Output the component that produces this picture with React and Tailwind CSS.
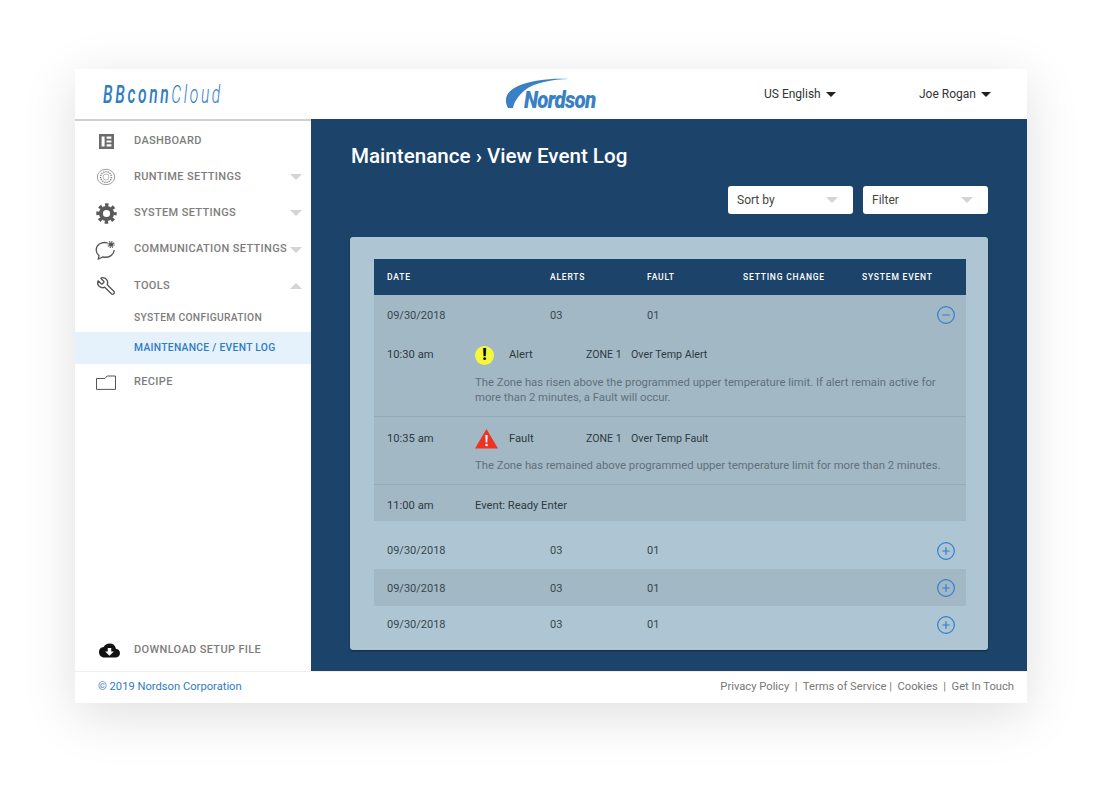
import { CirclePlus, CircleMinus, Wrench } from 'lucide-react'
import { MdCloudDownload } from 'react-icons/md'

const Caret = ({ up, className = 'border-[#d4d4d4]' }) => (
  <span className={`w-0 h-0 border-x-[6px] border-x-transparent ${up ? 'border-b-[6px]' : 'border-t-[6px]'} ${className}`} />
)
const DarkCaret = () => (
  <span className="w-0 h-0 border-x-[5px] border-x-transparent border-t-[5px] border-[#222]" />
)

const DashIcon = () => (
  <svg width="15" height="15" viewBox="0 0 15 15"><path fill="#6b6b6b" fillRule="evenodd" d="M0 0h15v15H0zM2.6 2.6v9.8h3V2.6zM7.6 2.6v2.2h4.8V2.6zM7.6 6.4v2.2h4.8V6.4zM7.6 10.2v2.2h4.8v-2.2z" /></svg>
)
const RuntimeIcon = () => (
  <svg width="20" height="18" viewBox="0 0 20 18" fill="none" stroke="#777">
    <ellipse cx="10" cy="9" rx="8.7" ry="7.7" strokeWidth=".7" />
    <circle cx="10" cy="9" r="5.4" strokeWidth="1.4" strokeDasharray="1.2 1" />
    <circle cx="10" cy="9" r="3" strokeWidth=".5" />
  </svg>
)
const GearIcon = () => (
  <svg width="21" height="21" viewBox="0 0 21 21" fill="none" stroke="#5a5a5a">
    <circle cx="10.5" cy="10.5" r="5.6" strokeWidth="4" />
    <circle cx="10.5" cy="10.5" r="8.5" strokeWidth="3.4" strokeDasharray="3.4 3.28" strokeDashoffset="1.7" />
  </svg>
)
const ChatIcon = () => (
  <svg width="22" height="20" viewBox="0 0 22 20" fill="none" stroke="#555" strokeWidth="1.3">
    <path d="M12.5 2.8C6 1.5 1.2 5 1.2 10c0 2.6 1.2 4.4 2.8 5.6L3.4 19l4.4-2c6 1.2 11.2-2 11.4-7" />
    <circle cx="16" cy="4.5" r="2.2" fill="#555" stroke="none" />
    <circle cx="16" cy="4.5" r="3" strokeWidth="1.2" strokeDasharray="1.2 1.15" />
  </svg>
)
const FolderIcon = () => (
  <svg width="20" height="15" viewBox="0 0 20 15" fill="none" stroke="#555" strokeWidth="1"><path d="M.5 3.5h8.4L11.2 1h8.3v13.4H.5z" /></svg>
)

const NavItem = ({ icon, label, caret, active, sub, h = 'h-[36px]' }) => (
  <div className={`flex items-center pl-[59px] relative font-medium ${sub ? 'text-[10.3px] tracking-[0.3px]' : 'text-[11px] tracking-[0.35px]'} ${active ? 'text-[#2f7cc4] bg-[#e5f2fb]' : 'text-[#7d7d7d]'} ${h}`}>
    {icon && <span className="absolute left-[19px] w-[24px] flex justify-center">{icon}</span>}
    <span>{label}</span>
    {caret && <span className="absolute right-[9px] flex"><Caret up={caret === 'up'} /></span>}
  </div>
)

const Select = ({ label }) => (
  <div className="w-[125px] h-[28px] bg-white rounded-[3px] flex items-center justify-between pl-[9px] pr-[15px] text-[12px] text-[#444]">
    {label}<Caret />
  </div>
)

const cols = 'grid grid-cols-[163px_97px_96px_119px_1fr] items-center pl-[13px]'

const DayRow = ({ striped, open, h = 'h-[37px]' }) => (
  <div className={`relative ${h} ${striped ? 'bg-[#a3b8c5]' : ''}`}>
    <div className={`${cols} h-full ${striped ? 'pt-[3px]' : 'pt-[2px]'} text-[11px] text-[#36474f]`}>
      <span>09/30/2018</span><span>03</span><span>01</span>
    </div>
    <span className="absolute right-[10px] inset-y-0 flex items-center text-[#2f7fd0]">
      {open ? <CircleMinus size={20} strokeWidth={1.4} /> : <CirclePlus size={20} strokeWidth={1.4} />}
    </span>
  </div>
)

const AlertIcon = () => (
  <span className="w-[19px] h-[19px] rounded-full bg-[#f4f73c] flex items-center justify-center font-black text-[16px] leading-none text-black">!</span>
)
const FaultIcon = () => (
  <svg width="23" height="20" viewBox="0 0 23 20"><path fill="#ef3323" d="M11.5 0 23 19.5H0z" /><path fill="#fff" d="M10.4 6h2.2l-.3 7.5h-1.6z" /><circle cx="11.5" cy="16" r="1.3" fill="#fff" /></svg>
)

const EventRow = ({ time, icon, type, text, title, gap }) => (
  <div className="pl-[13px] pr-[24px] border-b border-[#93aab9]">
    <div className="flex items-center h-[22px] text-[#2d3a42] text-[11.2px]">
      <span className="w-[88px]">{time}</span>
      <span className="w-[34px] flex">{icon}</span>
      <span className="w-[77px]">{type}</span>
      <span className="w-[45px] text-[10.6px]">ZONE 1</span>
      <span className="text-[10.7px]">{title}</span>
    </div>
    <p className={`ml-[88px] text-[11.3px] leading-[15px] text-[#5f707c] ${gap}`}>{text}</p>
  </div>
)

export default function App() {
  return (
    <div className="min-h-[785px] bg-white pt-[69px] pl-[75px] font-['Roboto',sans-serif]">
      <div className="w-[952px] h-[634px] bg-white flex flex-col shadow-[0_12px_50px_rgba(0,0,0,0.13)]">
        <header className="h-[50px] flex items-center relative shrink-0">
          <div className="w-[236px] pl-[28px] text-[#2f7cc4] text-[26px] italic tracking-[4.4px] leading-none whitespace-nowrap">
            <span className="inline-block origin-left scale-x-[0.6]"><span className="font-medium">BBconn</span><span className="font-light">Cloud</span></span>
          </div>
          <div className="absolute left-[429px] top-[8px] w-[92px] h-[34px]">
            <svg width="92" height="34" viewBox="0 0 92 34" className="absolute inset-0"><path fill="#3a80c4" d="M4 31C-1 22 3 14 14 9 28 3 48 1 65 2 48 2 30 6 21 13 14 19 10 25 9 31z" /></svg>
            <span className="absolute left-[20px] top-[11px] text-[#3a80c4] text-[24px] font-black italic tracking-[-0.8px] leading-[24px] origin-left scale-x-[0.855] inline-block">Nordson</span>
          </div>
          <div className="absolute left-[689px] flex items-center gap-[5px] text-[12px] text-[#333]">US English <DarkCaret /></div>
          <div className="absolute left-[844px] flex items-center gap-[5px] text-[12px] text-[#333]">Joe Rogan <DarkCaret /></div>
        </header>
        <div className="flex flex-1 min-h-0">
          <aside className="w-[236px] shrink-0 flex flex-col border-t-2 border-[#d0d0d0] pt-[3px]">
            <NavItem icon={<DashIcon />} label="DASHBOARD" h="h-[35px]" />
            <NavItem icon={<RuntimeIcon />} label="RUNTIME SETTINGS" caret="down" />
            <NavItem icon={<GearIcon />} label="SYSTEM SETTINGS" caret="down" />
            <NavItem icon={<ChatIcon />} label="COMMUNICATION SETTINGS" caret="down" h="h-[37px]" />
            <NavItem icon={<Wrench size={20} color="#555" strokeWidth={1.6} className="-scale-x-100" />} label="TOOLS" caret="up" />
            <NavItem label="SYSTEM CONFIGURATION" sub h="h-[28px]" />
            <NavItem label="MAINTENANCE / EVENT LOG" sub active h="h-[32px]" />
            <NavItem icon={<FolderIcon />} label="RECIPE" />
            <div className="mt-auto mb-[3px]">
              <NavItem icon={<span className="ml-[6px] flex"><MdCloudDownload size={21} color="#111" /></span>} label="DOWNLOAD SETUP FILE" />
            </div>
          </aside>
          <main className="flex-1 bg-[#1c4369] px-[39px] pt-[24px]">
            <h1 className="ml-[1px] text-[20.6px] leading-[26px] font-medium text-white">Maintenance › View Event Log</h1>
            <div className="flex justify-end gap-[10px] mt-[17px]">
              <Select label="Sort by" /><Select label="Filter" />
            </div>
            <div className="mt-[23px] h-[413px] bg-[#aec6d3] rounded-[3px] pt-[22px] pl-[24px] pr-[22px] shadow-[0_1px_2px_rgba(0,0,0,0.4)]">
              <div className={`${cols} h-[36px] bg-[#1c4369] text-white text-[8.5px] font-medium tracking-[0.8px]`}>
                <span>DATE</span><span>ALERTS</span><span>FAULT</span><span>SETTING CHANGE</span><span>SYSTEM EVENT</span>
              </div>
              <div className="bg-[#a3b8c5] h-[226px] mb-[11px]">
                <DayRow open h="h-[40px]" />
                <div className="pt-[9px]">
                  <EventRow time="10:30 am" icon={<AlertIcon />} type="Alert" title="Over Temp Alert" gap="mt-[9px] pb-[11px]"
                    text="The Zone has risen above the programmed upper temperature limit. If alert remain active for more than 2 minutes, a Fault will occur." />
                </div>
                <div className="pt-[11px]">
                  <EventRow time="10:35 am" icon={<FaultIcon />} type="Fault" title="Over Temp Fault" gap="mt-[8px] pb-[11px]"
                    text="The Zone has remained above programmed upper temperature limit for more than 2 minutes." />
                </div>
                <div className="flex items-center h-[36px] pt-[7px] pl-[13px] text-[11.2px] text-[#2d3a42]">
                  <span className="w-[88px]">11:00 am</span><span>Event: Ready Enter</span>
                </div>
              </div>
              <DayRow /><DayRow striped /><DayRow />
            </div>
          </main>
        </div>
        <footer className="h-[32px] shrink-0 flex items-center justify-between pl-[23px] pr-[13px] text-[11.2px] border-t border-[#eee]">
          <span className="text-[#2f7cc4]">© 2019 Nordson Corporation</span>
          <span className="text-[#777] whitespace-pre">Privacy Policy  |  Terms of Service |  Cookies  |  Get In Touch</span>
        </footer>
      </div>
    </div>
  )
}
